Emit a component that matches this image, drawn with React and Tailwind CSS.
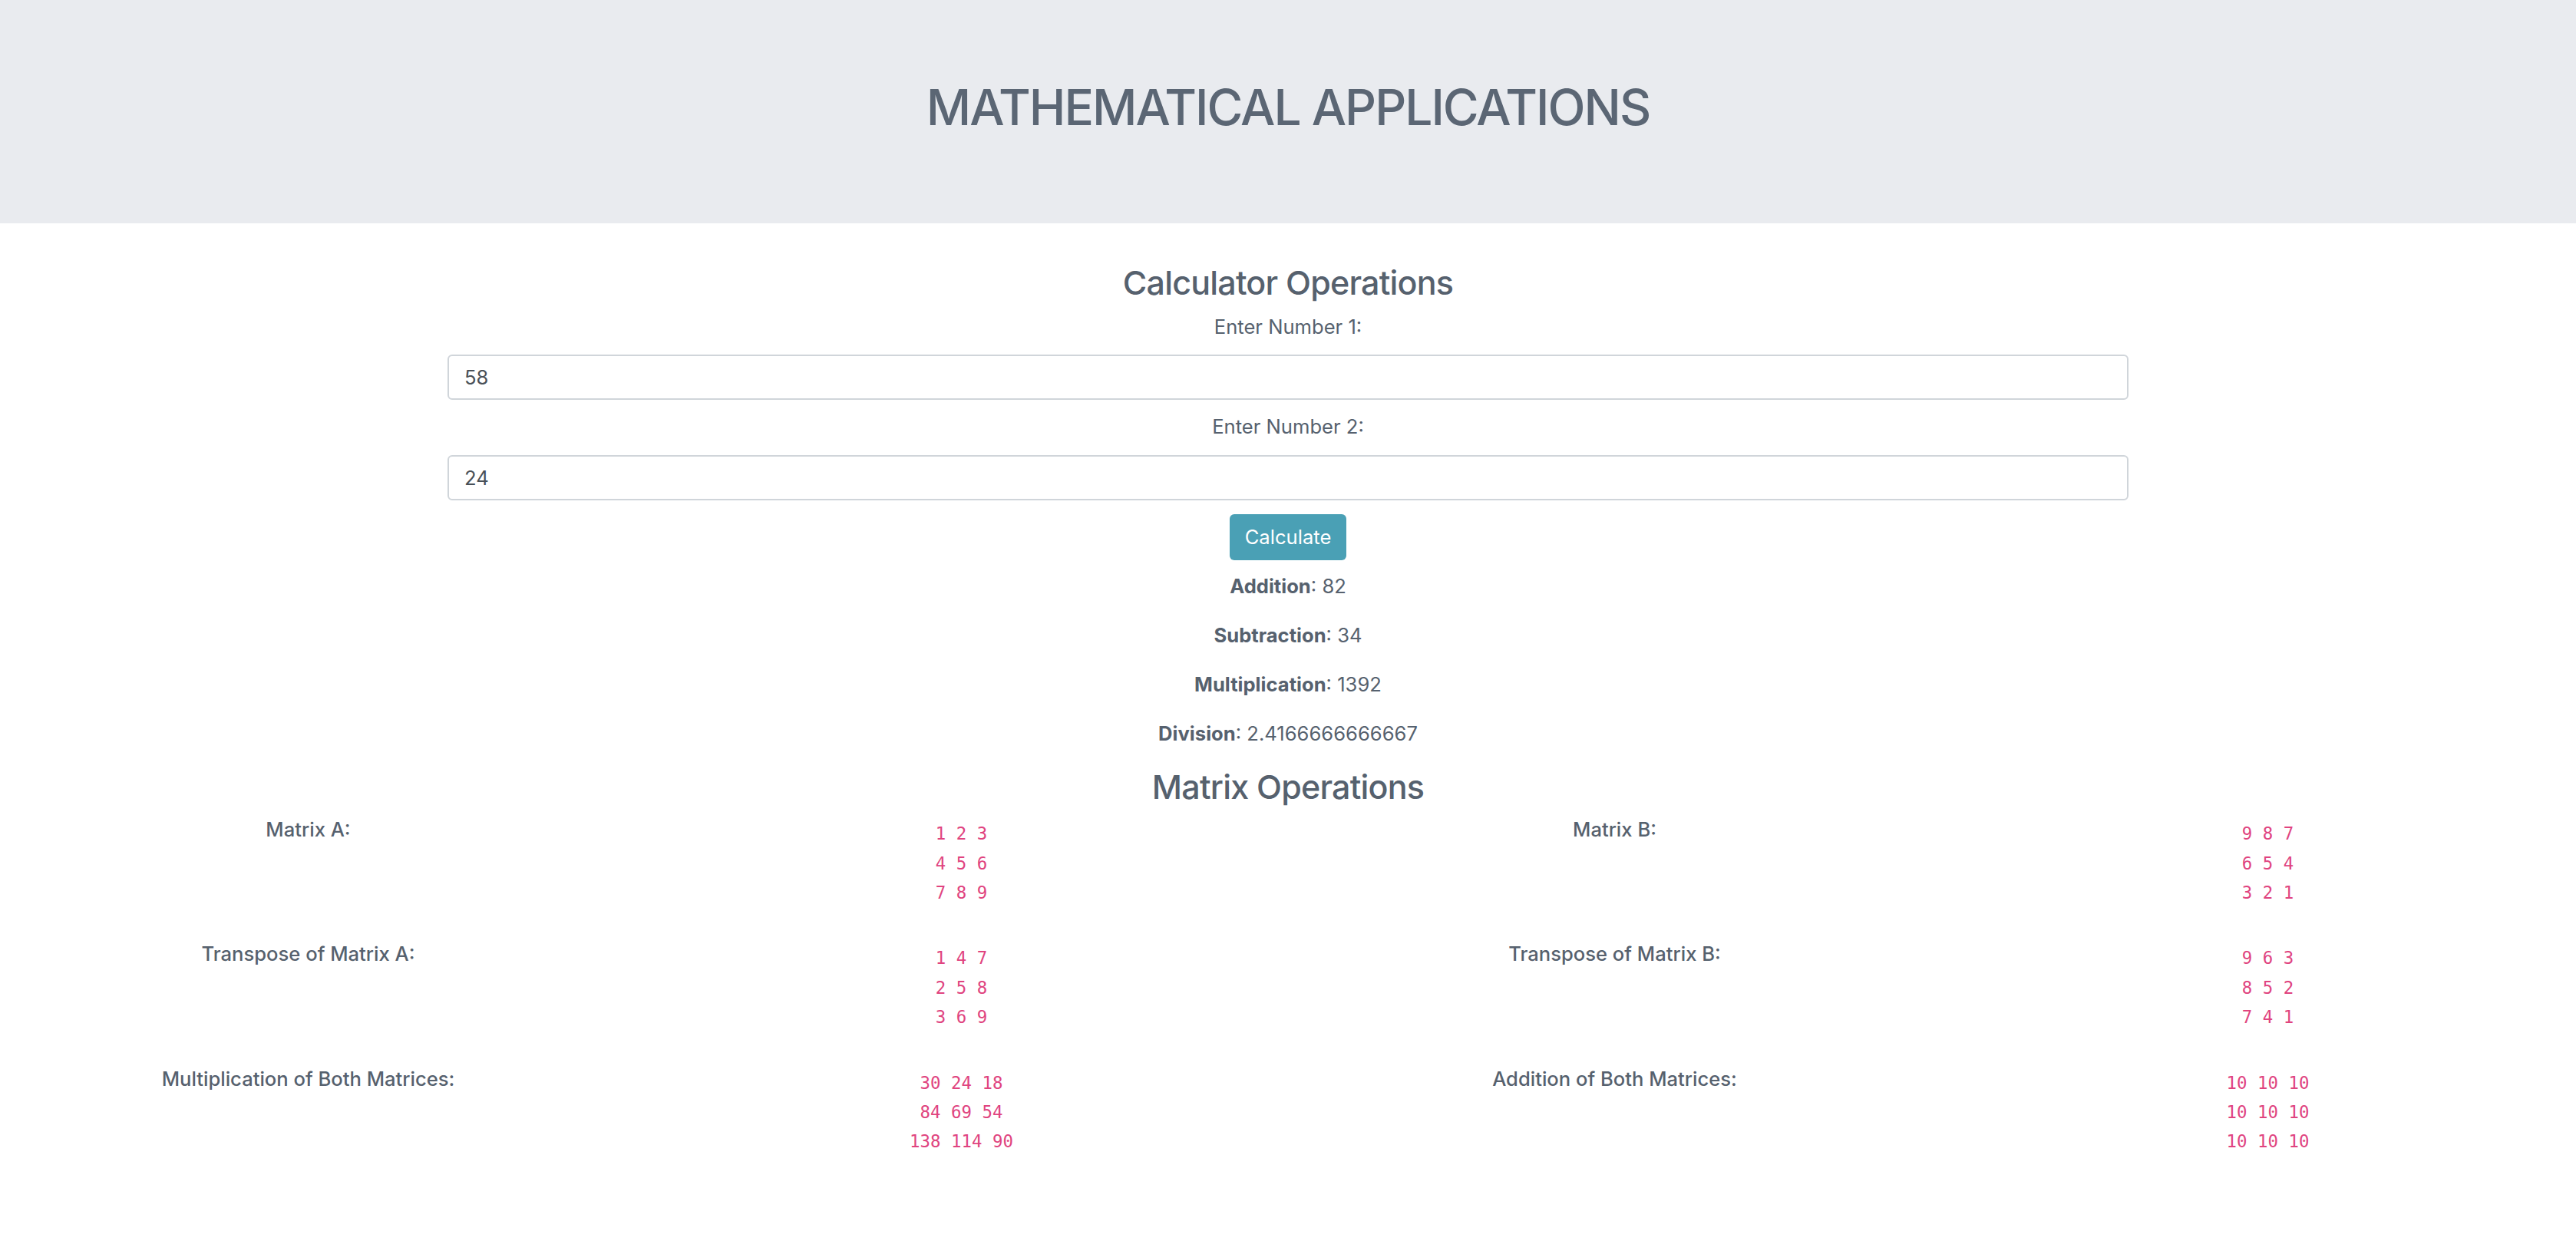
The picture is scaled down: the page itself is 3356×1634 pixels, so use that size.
import { useState } from 'react';

const MATRIX_A = [[1, 2, 3], [4, 5, 6], [7, 8, 9]];
const MATRIX_B = [[9, 8, 7], [6, 5, 4], [3, 2, 1]];

const transpose = (m) => m[0].map((_, c) => m.map((row) => row[c]));
const multiply = (a, b) =>
  a.map((row) => b[0].map((_, c) => row.reduce((sum, v, k) => sum + v * b[k][c], 0)));
const add = (a, b) => a.map((row, r) => row.map((v, c) => v + b[r][c]));

function MatrixLabel({ children }) {
  return <div className="text-[25.6px] leading-[38.4px] font-medium">{children}</div>;
}

function MatrixValues({ m }) {
  return (
    <div className="pt-[5px]">
      {m.map((row, i) => (
        <div key={i} className="font-['DejaVu_Sans_Mono',monospace] text-[22.4px] leading-[38.4px]">
          <code className="font-['DejaVu_Sans_Mono',monospace] text-[22.4px] text-[#e0447f]">
            {row.join(' ')}
          </code>
        </div>
      ))}
    </div>
  );
}

export default function App() {
  const [num1, setNum1] = useState('58');
  const [num2, setNum2] = useState('24');
  const [res, setRes] = useState({ a: 82, s: 34, m: 1392, d: 2.4166666666667 });

  const calc = () => {
    const x = parseFloat(num1) || 0;
    const y = parseFloat(num2) || 0;
    setRes({ a: x + y, s: x - y, m: x * y, d: y ? +(x / y).toFixed(13) : 0 });
  };

  const rows = [
    ['Matrix A:', MATRIX_A, 'Matrix B:', MATRIX_B],
    ['Transpose of Matrix A:', transpose(MATRIX_A), 'Transpose of Matrix B:', transpose(MATRIX_B)],
    ['Multiplication of Both Matrices:', multiply(MATRIX_A, MATRIX_B), 'Addition of Both Matrices:', add(MATRIX_A, MATRIX_B)],
  ];

  return (
    <div className="min-h-screen bg-white text-[#56616e] font-['Inter',sans-serif] overflow-x-hidden">
      {/* Jumbotron */}
      <header className="bg-[#e9ebef] h-[291px] pt-[101px] text-center">
        <h1 className="text-[64px] leading-[77px] font-medium tracking-[-2px] text-[#5b6674]">MATHEMATICAL APPLICATIONS</h1>
      </header>

      <main className="pt-[50px] text-center text-[25.6px] leading-[38.4px]">
        <h3 className="text-[43px] leading-[54px] font-medium tracking-[-0.8px] mb-[12px]">Calculator Operations</h3>

        <div className="w-[2190px] mx-auto flex flex-col items-center">
          <label className="block">Enter Number 1:</label>
          <input
            value={num1}
            onChange={(e) => setNum1(e.target.value)}
            className="mt-[17px] w-full h-[59px] px-[20px] border-2 border-[#d0d5da] rounded-[6px] text-[#495057] outline-none"
          />
          <label className="block mt-[16px]">Enter Number 2:</label>
          <input
            value={num2}
            onChange={(e) => setNum2(e.target.value)}
            className="mt-[17px] w-full h-[59px] px-[20px] border-2 border-[#d0d5da] rounded-[6px] text-[#495057] outline-none"
          />
          <button
            onClick={calc}
            className="mt-[18px] h-[60px] w-[152px] rounded-[6px] bg-[#4aa0b5] text-white"
          >
            Calculate
          </button>
        </div>

        <div className="mt-[15px] flex flex-col gap-[25.6px]">
          <p><strong className="font-bold">Addition</strong>: {res.a}</p>
          <p><strong className="font-bold">Subtraction</strong>: {res.s}</p>
          <p><strong className="font-bold">Multiplication</strong>: {res.m}</p>
          <p><strong className="font-bold">Division</strong>: {res.d}</p>
        </div>

        <h3 className="mt-[23px] text-[43px] leading-[54px] font-medium tracking-[-0.8px] mb-[10px]">Matrix Operations</h3>

        <div className="-mx-[24px] grid grid-cols-4 gap-y-[42px] pb-[60px]">
          {rows.map(([la, ma, lb, mb]) => [
            <MatrixLabel key={la}>{la}</MatrixLabel>,
            <MatrixValues key={la + 'v'} m={ma} />,
            <MatrixLabel key={lb}>{lb}</MatrixLabel>,
            <MatrixValues key={lb + 'v'} m={mb} />,
          ])}
        </div>
      </main>
    </div>
  );
}
